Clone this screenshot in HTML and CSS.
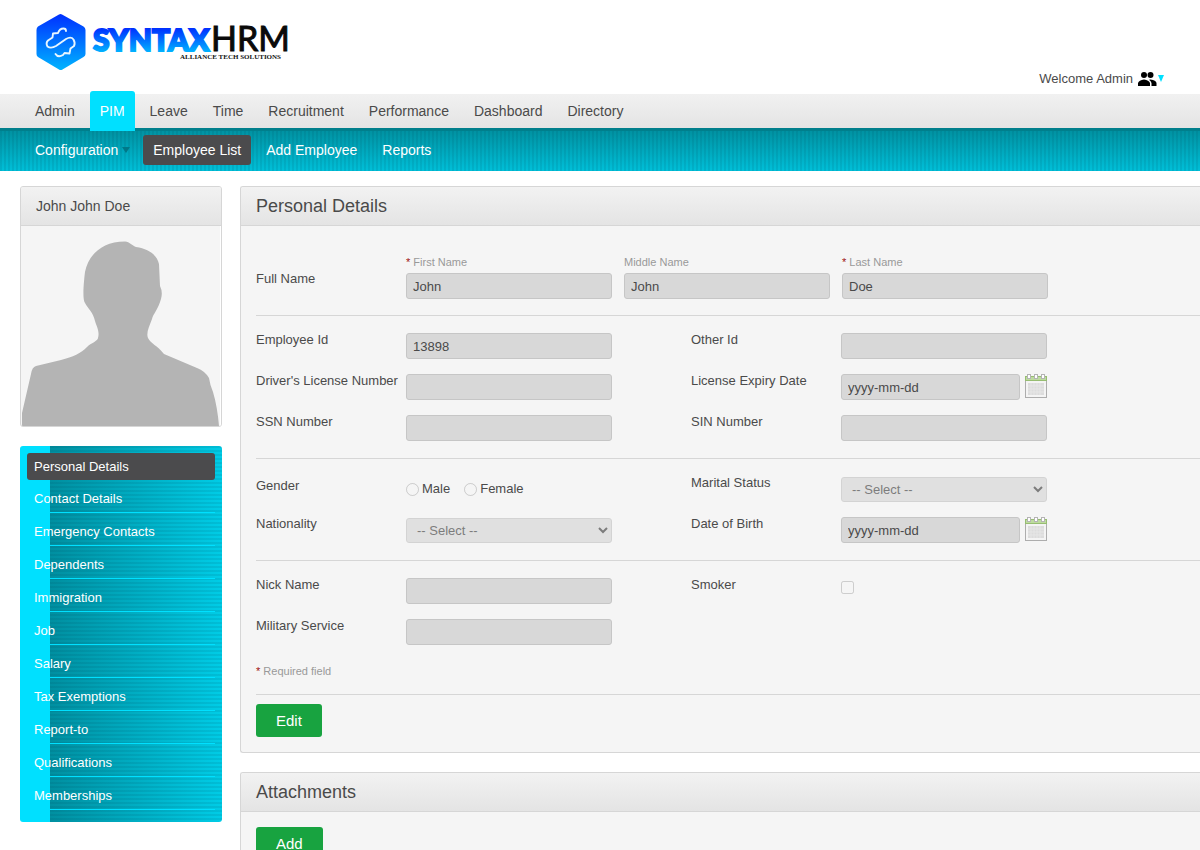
FILE: index.html
```html
<!DOCTYPE html>
<html lang="en">
<head>
<meta charset="utf-8">
<title>SyntaxHRM - Personal Details</title>
<link rel="stylesheet" href="styles.css">
</head>
<body>
<header class="masthead">
  <svg class="logo" width="264" height="64" viewBox="0 0 264 64" role="img" aria-label="SyntaxHRM">
    <defs>
      <linearGradient id="brand" x1="0" y1="0" x2="0" y2="1"><stop offset="0" stop-color="#0030ff"/><stop offset="1" stop-color="#00b4ff"/></linearGradient>
      <linearGradient id="word" gradientUnits="userSpaceOnUse" x1="0" y1="18" x2="0" y2="44"><stop offset="0" stop-color="#0028ff"/><stop offset="1" stop-color="#00b8ff"/></linearGradient>
    </defs>
    <path d="M30 5.500 51.500 17.500Q53.500 18.500 53.500 21V45Q53.500 47 51.500 48L30.500 60.500Q28.500 61.500 27 60.500L6 48Q4.500 47 4.500 45V21Q4.500 18.500 6 17.500L27 5.500Q28.500 4.500 30 5.500Z" fill="url(#brand)"/>
    <path d="M34 22 Q34 19.500 31.500 19.500 27.500 19.500 26 24L21 24.500 20.500 28.500 16 31.500Q13.500 34 15.500 37.500 19 40 24 37L34 30Q39 27 41.500 30.500 43.500 34 42 37L38.500 39.500 37.500 44.500 32.500 44 31 46Q26 49 23.500 45" fill="none" stroke="#e8f6ff" stroke-width="1.900" stroke-linecap="round" stroke-linejoin="round"/>
    <text class="word-a" x="61" y="42">SYNTAX</text>
    <text class="word-b" x="179" y="42">HRM</text>
    <text class="tagline" x="148" y="50">ALLIANCE TECH SOLUTIONS</text>
  </svg>
  <button class="welcome" type="button">Welcome Admin
    <svg width="26" height="16" viewBox="0 0 26 16" aria-hidden="true"><g fill="#000"><circle cx="6" cy="4" r="3"/><circle cx="12.500" cy="4" r="3"/><path d="M0 15V12Q1 9 6 8.500 11 9 12 12V15ZM12.500 8.500Q18 9 18.500 12V15H13.500V12Q13 10 11 8.700Z"/></g><path d="M20 4H26L23 11Z" fill="#00e0ff"/></svg>
  </button>
</header>
<nav class="tabs" aria-label="Main">
  <a href="#">Admin</a><a href="#" class="active">PIM</a><a href="#">Leave</a><a href="#">Time</a><a href="#">Recruitment</a><a href="#">Performance</a><a href="#">Dashboard</a><a href="#">Directory</a>
</nav>
<nav class="subtabs" aria-label="PIM">
  <a href="#" class="has-menu">Configuration<svg width="8" height="6" viewBox="0 0 8 6" aria-hidden="true"><path d="M0 0H8L4 6Z" fill="#007888"/></svg></a><a href="#" class="active">Employee List</a><a href="#">Add Employee</a><a href="#">Reports</a>
</nav>
<main class="layout">
  <aside class="sidebar">
    <section class="panel profile">
      <h2 class="profile-name">John John Doe</h2>
      <svg class="photo" viewBox="0 0 200 200" role="img" aria-label="Employee photo">
        <path d="M199 0H200V200H199Z" fill="#fff"/>
        <path fill="#b4b4b4" d="M1 200V187L10 148Q11 141 15 140L40 134C52 131 60 127 66 121C70 117 77 115 77 112C79 105 75 99 74 95C72 86 68 84 64 77C61 74 63 54 64 46C67 30 80 15.500 104 15.500C109 16 110 19 115 21C128 23 136 29 138 38L139 60Q142 66 140 73C137 84 132 88 131 93C128 101 125 107 127 112C130 118 136 119 143 128L176 142Q184 145 188 152Q189 159 192 166C195 176 197 188 198 200Z"/>
      </svg>
    </section>
    <nav class="side-menu" aria-label="Employee">
      <a href="#" class="active">Personal Details</a>
      <a href="#">Contact Details</a>
      <a href="#">Emergency Contacts</a>
      <a href="#">Dependents</a>
      <a href="#">Immigration</a>
      <a href="#">Job</a>
      <a href="#">Salary</a>
      <a href="#">Tax Exemptions</a>
      <a href="#">Report-to</a>
      <a href="#">Qualifications</a>
      <a href="#">Memberships</a>
    </nav>
  </aside>
  <div class="content">
    <section class="panel wide">
      <h1 class="panel-title">Personal Details</h1>
      <form class="details">
        <div class="group name-row">
          <span class="label name-label">Full Name</span>
          <div class="name-field"><label for="first"><span class="req">*</span> First Name</label><input id="first" type="text" value="John" disabled></div>
          <div class="name-field"><label for="middle">Middle Name</label><input id="middle" type="text" value="John" disabled></div>
          <div class="name-field"><label for="last"><span class="req">*</span> Last Name</label><input id="last" type="text" value="Doe" disabled></div>
        </div>
        <div class="group grid">
          <label class="label" for="eid">Employee Id</label><input id="eid" type="text" value="13898" disabled>
          <label class="label" for="oid">Other Id</label><input id="oid" type="text" disabled>
          <label class="label" for="dln">Driver's License Number</label><input id="dln" type="text" disabled>
          <label class="label" for="exp">License Expiry Date</label>
          <div class="date"><input id="exp" type="text" value="yyyy-mm-dd" disabled><svg width="22" height="24" viewBox="0 0 22 24" aria-hidden="true"><rect x=".5" y="5.500" width="21" height="18" fill="#f4f4f4" stroke="#adadad"/><path d="M0 2H22V7H0Z" fill="#97bd72"/><path d="M1 3H21V6H1Z" fill="#bddb9f"/><path d="M3 9H19V21H3Z" fill="#dcdcdc"/><path d="M6 9V21M9 9V21M12 9V21M15 9V21M3 12H19M3 15H19M3 18H19" stroke="#e6e6e6"/><g fill="#fff" stroke="#b4b4b4"><rect x="2.500" y=".5" width="3" height="4"/><rect x="9.500" y=".5" width="3" height="4"/><rect x="16.500" y=".5" width="3" height="4"/></g></svg></div>
          <label class="label" for="ssn">SSN Number</label><input id="ssn" type="text" disabled>
          <label class="label" for="sin">SIN Number</label><input id="sin" type="text" disabled>
        </div>
        <div class="group grid">
          <span class="label gender-label" id="gender">Gender</span>
          <div class="radios" role="radiogroup" aria-labelledby="gender">
            <label><input type="radio" name="gender" disabled>Male</label>
            <label><input type="radio" name="gender" disabled>Female</label>
          </div>
          <label class="label" for="marital">Marital Status</label><select id="marital" disabled><option>-- Select --</option></select>
          <label class="label" for="nation">Nationality</label><select id="nation" disabled><option>-- Select --</option></select>
          <label class="label" for="dob">Date of Birth</label>
          <div class="date"><input id="dob" type="text" value="yyyy-mm-dd" disabled><svg width="22" height="24" viewBox="0 0 22 24" aria-hidden="true"><rect x=".5" y="5.500" width="21" height="18" fill="#f4f4f4" stroke="#adadad"/><path d="M0 2H22V7H0Z" fill="#97bd72"/><path d="M1 3H21V6H1Z" fill="#bddb9f"/><path d="M3 9H19V21H3Z" fill="#dcdcdc"/><path d="M6 9V21M9 9V21M12 9V21M15 9V21M3 12H19M3 15H19M3 18H19" stroke="#e6e6e6"/><g fill="#fff" stroke="#b4b4b4"><rect x="2.500" y=".5" width="3" height="4"/><rect x="9.500" y=".5" width="3" height="4"/><rect x="16.500" y=".5" width="3" height="4"/></g></svg></div>
        </div>
        <div class="group last">
          <div class="grid">
            <label class="label" for="nick">Nick Name</label><input id="nick" type="text" disabled>
            <label class="label" for="smoker">Smoker</label><input id="smoker" type="checkbox" disabled>
            <label class="label" for="military">Military Service</label><input id="military" type="text" disabled>
          </div>
          <p class="required"><span class="req">*</span> Required field</p>
        </div>
        <button class="action" type="button">Edit</button>
      </form>
    </section>
    <section class="panel wide">
      <h2 class="panel-title">Attachments</h2>
      <div class="attachments"><button class="action" type="button">Add</button></div>
    </section>
  </div>
</main>
</body>
</html>
```
FILE: styles.css
```css
* { box-sizing: border-box; }
body { margin: 0; background: #fff; color: #4a4a4a; font: 13px/16px "Liberation Sans", Arial, sans-serif; }
a { color: inherit; text-decoration: none; }
h1, h2, p { margin: 0; font-weight: normal; }
input, select, button { font: inherit; color: inherit; margin: 0; }

.masthead { display: flex; justify-content: space-between; align-items: flex-end; height: 94px; padding: 0 36px 7px 32px; }
.logo { align-self: flex-start; margin-top: 9px; }
.word-a { font: 900 30px Lato, sans-serif; fill: url(#word); stroke: url(#word); stroke-width: 2px; }
.word-b { font: 400 34px Lato, sans-serif; fill: #0a0a0a; stroke: #0a0a0a; }
.tagline { font: bold 7px "Liberation Serif", serif; fill: #111; }
.welcome { display: flex; align-items: center; gap: 5px; padding: 0; border: 0; background: none; }

.tabs { display: flex; gap: 5px; height: 34px; padding: 0 25px; background: linear-gradient(#f1f1f1, #e4e4e4); font-size: 14px; }
.tabs a { height: 40px; margin-top: -3px; padding: 0 10px; line-height: 40px; }
.tabs .active { position: relative; background: #00e0ff; color: #fff; border-radius: 3px 3px 0 0; }
.subtabs { display: flex; gap: 5px; padding: 4px 25px 6px; border-top: 3px solid #007f8c; color: #fff; font-size: 14px;
  background: repeating-linear-gradient(90deg, rgba(0, 60, 80, .1) 0 2px, transparent 2px 4px), linear-gradient(#0092a2, #00bfd8); }
.subtabs a { padding: 0 10px; line-height: 30px; border-radius: 3px; }
.subtabs .active { background: #4b4b4d; }
.subtabs .has-menu { display: flex; align-items: center; gap: 4px; padding-right: 8px; }

.layout { display: flex; gap: 18px; padding: 15px 0 0 20px; }
.sidebar { flex: 0 0 202px; }
.content { flex: 1; min-width: 820px; }
.panel { margin-bottom: 19px; border: 1px solid #d6d6d6; border-radius: 3px; background: #f5f5f5; overflow: hidden; }
.wide { border-right: 0; border-radius: 3px 0 0 3px; }
.profile-name, .panel-title { padding: 0 15px; line-height: 38px; border-bottom: 1px solid #d6d6d6; background: linear-gradient(#f2f2f2, #e4e4e4); }
.profile-name { font-size: 14px; }
.panel-title { font-size: 18px; }
.photo { display: block; width: 100%; }

.side-menu { display: flex; flex-direction: column; padding: 7px 7px 12px; border-radius: 3px; color: #fff;
  background: linear-gradient(#00e0ff, #00e0ff) 0 0 / 30px 100% no-repeat, repeating-linear-gradient(rgba(0, 60, 80, .1) 0 2px, transparent 2px 4px), linear-gradient(90deg, #008fa0 30px, #00cce6); }
.side-menu a { padding: 6px 7px 0; line-height: 26px; border-bottom: 1px solid #00e0ff; }
.side-menu .active { padding-top: 0; line-height: 27px; border: 0; border-radius: 3px; background: #4b4b4d; }

.details { padding: 0 0 15px 15px; }
.group { padding: 17px 0; border-bottom: 1px solid #d6d6d6; }
.grid { display: grid; grid-template-columns: 150px 285px 150px 206px; grid-auto-rows: 26px; row-gap: 15px; justify-items: start; }
.label { line-height: 14px; }
.name-row { display: flex; gap: 12px; padding: 28px 0 16px; }
.name-label { width: 138px; padding-top: 18px; }
.name-field { display: flex; flex-direction: column; gap: 3px; width: 206px; }
.name-field label, .required { color: #999; font-size: 11px; }
.req { color: #a01010; }
input[type=text] { width: 206px; height: 26px; padding: 0 6px; border: 1px solid #c6c6c6; border-radius: 3px; background: #d8d8d8; color: #4a4a4a; }
select { align-self: end; width: 206px; height: 25px; padding: 0 6px; border: 1px solid #c6c6c6; border-radius: 3px; background: #d8d8d8; opacity: .7; }
.date { display: flex; gap: 5px; }
.date input[type=text] { width: 179px; }
.gender-label { padding-top: 3px; }
.radios { display: flex; gap: 14px; }
.radios label { display: flex; align-items: center; gap: 3px; }
input[type=radio], input[type=checkbox] { width: 13px; height: 13px; }
input[type=checkbox] { margin-top: 3px; }
.last { padding-bottom: 15px; }
.required { padding-top: 18px; }
.action { display: block; height: 33px; padding: 0 20px; border: 0; border-radius: 3px; background: #18a340; color: #fff; font-size: 15px; }
.details .action { margin-top: 9px; }
.attachments { padding: 15px; }
```
